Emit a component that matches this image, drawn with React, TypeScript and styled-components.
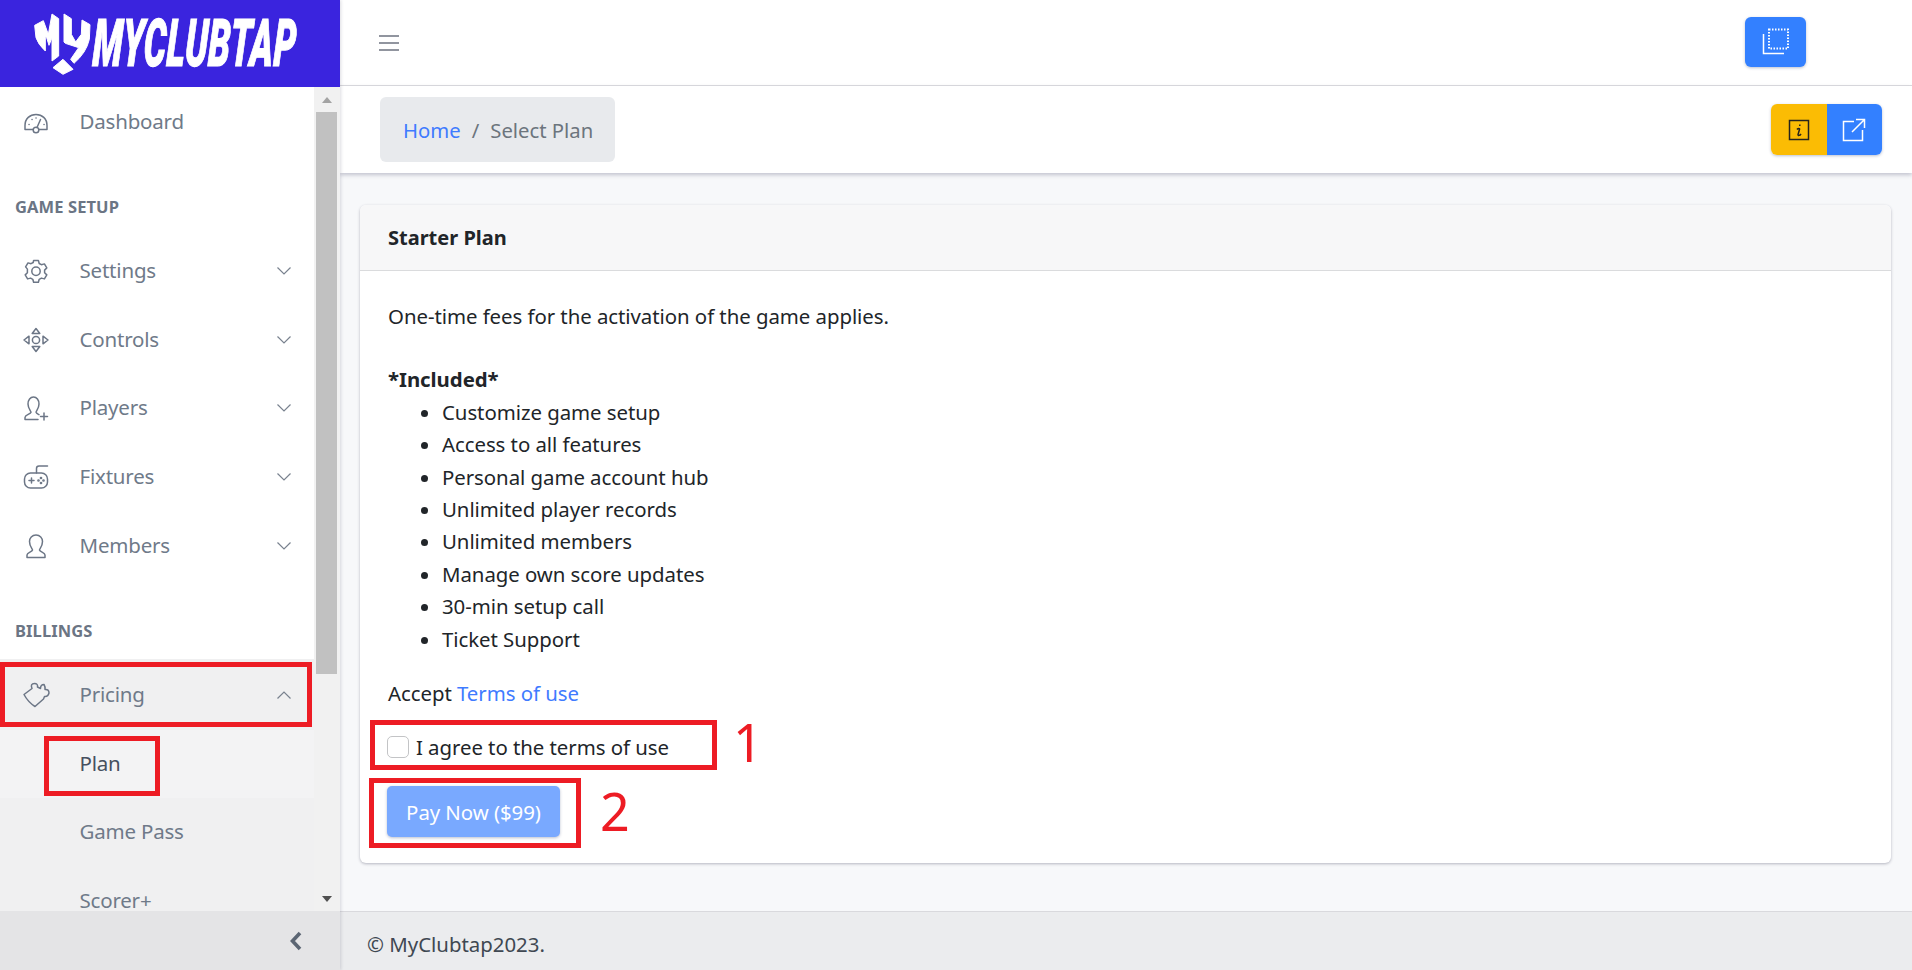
import React from "react";
import styled, { createGlobalStyle } from "styled-components";

const Global = createGlobalStyle`
  html, body { margin: 0; padding: 0; height: 100%; overflow: hidden; }
  body { font-family: "Noto Sans", "Open Sans", Arial, sans-serif; color: #212529; background: #f7f8fa; }
  * { box-sizing: border-box; }
`;

const Shell = styled.div`display: flex; width: 1912px; height: 970px; overflow: hidden;`;
const Sidebar = styled.aside`width: 340px; flex: none; display: flex; flex-direction: column; height: 970px; background: #fff; box-shadow: 1px 0 3px rgba(30,30,60,.15); position: relative; z-index: 3;`;
const Brand = styled.div`height: 87px; flex: none; background: #3a24de; display: flex; align-items: center; padding-left: 28px; overflow: hidden;`;
const BrandMark = styled.svg`width: 70px; height: 75px; flex: none; margin: 0 -5px 0 0; fill: #fff; stroke: #fff; stroke-width: 3; stroke-linejoin: round;`;
const BrandName = styled.span`
  font-family: Roboto, "Liberation Sans", sans-serif; font-weight: 900; font-style: italic; font-size: 66px; line-height: 1; color: #fff;
  -webkit-text-stroke: 1.2px #fff;
  display: inline-block; transform: scaleX(.53) skewX(-5deg); transform-origin: left center; white-space: nowrap; letter-spacing: 1px;
`;
const NavArea = styled.div`flex: 1; min-height: 0; display: flex; overflow: hidden;`;
const NavList = styled.nav`flex: 1; min-width: 0; overflow: hidden;`;
const Scrollbar = styled.div`width: 26px; flex: none; background: #f1f1f1; padding: 0 3px 0 2px; display: flex; flex-direction: column; align-items: stretch; position: relative;`;
const ScrollArrow = styled.div<{ $up?: boolean }>`
  height: 25px; flex: none; display: flex; align-items: center; justify-content: center;
  &::before { content: ""; width: 0; height: 0; border-left: 5.5px solid transparent; border-right: 5.5px solid transparent;
    ${p => p.$up ? "border-bottom: 6px solid #a3a3a3;" : "border-top: 6px solid #505050;"} }
`;
const ScrollThumb = styled.div`height: 562px; background: #c1c1c1; flex: none;`;
const ScrollGap = styled.div`flex: 1;`;
const NavRow = styled.div<{ $open?: boolean; $sub?: boolean; $active?: boolean; $tall?: boolean }>`
  height: ${p => p.$tall ? "69px" : "68.6px"}; display: flex; align-items: center; padding-left: ${p => p.$sub ? "79.5px" : "22px"}; padding-right: 22px;
  font-size: 20.5px; color: ${p => p.$active ? "#46505f" : "#6f7a89"}; position: relative;
  background: ${p => p.$active ? "#f3f3f4" : p.$open ? "#f0f0f1" : "transparent"};
`;
const NavIcon = styled.svg`width: 28px; height: 28px; flex: none; margin-right: 29.5px; fill: none; stroke: #6c7686; stroke-width: 1.5; stroke-linecap: round; stroke-linejoin: round;`;
const NavText = styled.span`flex: 1; letter-spacing: -.2px; padding-bottom: 2px;`;
const Chevron = styled.svg`width: 16px; height: 10px; flex: none; fill: none; stroke: #79828f; stroke-width: 1.2;`;
const NavGroup = styled.div`background: #f0f0f1; height: 300px; padding-top: 2px;`;
const SectionLabel = styled.div<{ $end?: boolean }>`
  font-size: 16.5px; font-weight: 700; color: #6b7584; padding: 0 15px; line-height: 24px; margin-top: 39px; margin-bottom: ${p => p.$end ? "16px" : "18px"}; letter-spacing: .1px;
`;
const Collapse = styled.div`height: 59px; flex: none; background: #e4e4e6; display: flex; align-items: center; justify-content: flex-end; padding-right: 37px;`;
const CollapseIcon = styled.svg`width: 14px; height: 20px; fill: none; stroke: #5b6573; stroke-width: 3.6;`;

const Main = styled.div`flex: 1; min-width: 0; display: flex; flex-direction: column;`;
const TopBar = styled.header`height: 86px; flex: none; background: #fff; border-bottom: 1px solid #dcdce0; display: flex; align-items: center; padding-left: 38px; justify-content: space-between; padding-right: 106px;`;
const Burger = styled.svg`width: 22px; height: 18px; fill: none; stroke: #6d7380; stroke-width: 1.6;`;
const SquareButton = styled.button`width: 61px; height: 50px; margin-top: -1px; border: 0; border-radius: 6px; background: #3380ff; display: flex; align-items: center; justify-content: center; box-shadow: 0 1px 3px rgba(30,50,100,.3); padding: 0;`;
const ButtonIcon = styled.svg`width: 28px; height: 28px; fill: none; stroke: #fff; stroke-width: 1.5;`;
const SubBar = styled.div`height: 87px; flex: none; background: #fff; display: flex; align-items: center; justify-content: space-between; padding: 0 30px 0 40px; box-shadow: 0 2px 4px rgba(40,40,80,.25); position: relative; z-index: 1;`;
const Crumbs = styled.ol`list-style: none; margin: 0; height: 65px; display: flex; align-items: center; gap: 11px; background: #e8eaed; border-radius: 6px; padding: 1px 22px 0 23px; font-size: 20.3px;`;
const CrumbLink = styled.a`color: #3f7bff; text-decoration: none;`;
const CrumbSep = styled.span`color: #6c757d;`;
const CrumbCurrent = styled.span`color: #6c757d;`;
const ButtonGroup = styled.div`display: flex; border-radius: 6px; overflow: hidden; box-shadow: 0 1px 3px rgba(30,50,100,.3);`;
const GroupButton = styled.button<{ $bg: string }>`width: 55.5px; height: 51px; border: 0; background: ${p => p.$bg}; display: flex; align-items: center; justify-content: center; padding: 0;`;
const InfoIcon = styled.svg`width: 22px; height: 22px; fill: none; stroke: #26241c; stroke-width: 1.5;`;

const Content = styled.main`flex: 1; min-height: 0; background: #f7f8fa; padding: 32px 21px 0 20px;`;
const Card = styled.section`height: 658px; background: #fff; border-radius: 6px; box-shadow: 0 1px 3px rgba(30,30,60,.3);`;
const CardHead = styled.h2`margin: 0; height: 66px; background: #f7f7f8; border-radius: 6px 6px 0 0; border-bottom: 1px solid #dadbdd; padding: 0 28px; display: flex; align-items: center; font-size: 20px; font-weight: 700; color: #212529;`;
const CardBody = styled.div`padding: 28.5px 28px 0; font-size: 20.4px; line-height: 32.4px; color: #212529; letter-spacing: -.05px;`;
const Para = styled.p`margin: 0 0 31.5px;`;
const Strong = styled.div`font-weight: 700;`;
const Bullets = styled.ul`margin: 0 0 21.5px; padding-left: 54px; list-style: disc;`;
const TermsLink = styled.a`color: #3f7bff; text-decoration: none;`;
const CheckRow = styled.label`display: flex; align-items: center; gap: 7px; margin-top: 21.5px; height: 32.5px; position: relative;`;
const Check = styled.input`appearance: none; width: 22px; height: 22px; margin: 0 0 0 -1px; border: 1px solid #c3c4c6; border-radius: 5px; background: #fff; flex: none;`;
const PayRow = styled.div`margin-top: 23px; position: relative; display: flex;`;
const PayButton = styled.button`margin-left: -1px; width: 173px; height: 51px; border: 0; border-radius: 5px; background: #79a9ff; color: #fff; font: inherit; letter-spacing: inherit; box-shadow: 0 1px 3px rgba(30,50,100,.3); padding: 1px 0 0;`;

const RedBox = styled.div<{ $l: number; $t: number; $w: number; $h: number }>`
  position: absolute; left: ${p => p.$l}px; top: ${p => p.$t}px; width: ${p => p.$w}px; height: ${p => p.$h}px; border: 5px solid #ed1c24; pointer-events: none; z-index: 4;
`;
const RedNumber = styled.span<{ $l: number; $t: number }>`
  position: absolute; left: ${p => p.$l}px; top: ${p => p.$t}px; color: #ed1c24; font-size: 52px; line-height: 60px; z-index: 4;
`;

const Foot = styled.footer`height: 59px; flex: none; background: #ebecee; border-top: 1px solid #d9d9dd; display: flex; align-items: center; padding-left: 27px; font-size: 20.4px; color: #3f4852; padding-top: 5px;`;

const Items: [string, React.ReactNode][] = [
  ["Settings", <><path d="M11.6 3.5h4.8l.8 3 2.2 1.2 3-.8 2.4 4-2.2 2.2v2.6l2.2 2.2-2.4 4-3-.8-2.2 1.2-.8 3h-4.8l-.8-3-2.2-1.2-3 .8-2.4-4 2.2-2.2V12.1L3.6 9.9l2.4-4 3 .8 2.2-1.2z" /><circle cx="14" cy="14.2" r="4.2" /></>],
  ["Controls", <><circle cx="14" cy="14" r="3.6" /><path d="M14 2.5l3.8 5h-7.6zM14 25.5l3.8-5h-7.6zM2 14l5-3.8v7.6zM26 14l-5-3.8v7.6z" /></>],
  ["Players", <><path d="M3 25.5v-2c0-2.5 5.5-3.3 6-5.3 0-1.2-3-3.5-3-8.2C6 6 8.3 3 11.5 3S17 6 17 10c0 4.7-3 7-3 8.2.2 1.2 2 2 3 2.5M3 25.5h13" /><path d="M22 19v7M18.5 22.5h7" /></>],
  ["Fixtures", <><path d="M25.5 3H17c-1.5 0-2.5 1-2.5 2.500V10" /><rect x="2.500" y="10" width="23" height="15" rx="6" /><path d="M7 17.500h5M9.500 15v5" /><circle cx="19" cy="15" r=".6" /><circle cx="19" cy="20" r=".6" /><circle cx="16.500" cy="17.500" r=".6" /><circle cx="21.500" cy="17.500" r=".6" /></>],
  ["Members", <><path d="M5 25.500v-2.500c0-2.500 5-3 5.500-5 0-1.200-3-3.500-3-8.500C7.500 6 10 3 14 3s6.500 3 6.500 6.500c0 5-3 7.300-3 8.500.5 2 5.500 2.500 5.500 5v2.500z" /></>],
];

function Down() { return <Chevron viewBox="0 0 16 10"><path d="M1.500 1.500L8 8l6.500-6.500" /></Chevron>; }

export default function App() {
  return (
    <Shell>
      <Global />
      <Sidebar>
        <Brand>
          <BrandMark viewBox="0 0 210 225" aria-hidden="true">
            <path d="M20 58L46 44 61 85 72 24 92 38V150L72 165V95L63 118 56 95 52 90V135Q30 115 24 95Z" />
            <path d="M108 24L130 38V85L143 108 160 85 162 42 186 56 184 100Q175 140 138 172L128 160 152 125 112 112 108 108Z" />
            <path d="M105 160L135 190 105 205 75 185Z" />
          </BrandMark>
          <BrandName>MYCLUBTAP</BrandName>
        </Brand>
        <NavArea>
          <NavList>
            <NavRow $tall>
              <NavIcon viewBox="0 0 28 28"><path d="M11 21.500H3v-4C3 10.500 8 6.500 14 6.500s11 4 11 11v4h-8" /><circle cx="14" cy="22" r="2.800" /><path d="M15 19.500l3.500-8M7 16.500h.1M10 11.500h.1M14 10h.1M22 16.500h.1" /></NavIcon>
              <NavText>Dashboard</NavText>
            </NavRow>
            <SectionLabel>GAME SETUP</SectionLabel>
            {Items.map(([label, icon]) => (
              <NavRow key={label}>
                <NavIcon viewBox="0 0 28 28">{icon}</NavIcon>
                <NavText>{label}</NavText>
                <Down />
              </NavRow>
            ))}
            <SectionLabel $end>BILLINGS</SectionLabel>
            <NavGroup>
              <NavRow $open>
                <NavIcon viewBox="0 0 28 28"><path d="M2 13.500L10 7.500Q8 2.500 12.500 2.500 16 2.500 15.500 6L18.500 7.500Q18.500 3.500 22 3.500 23.500 6 23 8.500 27 8 27 12 26 16 22.500 15.500L21.500 18 13 25.500Q6 21 2 13.500Z" /></NavIcon>
                <NavText>Pricing</NavText>
                <Chevron viewBox="0 0 16 10"><path d="M1.500 8.500L8 2l6.500 6.500" /></Chevron>
              </NavRow>
              <NavRow $sub $active><NavText>Plan</NavText></NavRow>
              <NavRow $sub $open><NavText>Game Pass</NavText></NavRow>
              <NavRow $sub $open><NavText>Scorer+</NavText></NavRow>
            </NavGroup>
          </NavList>
          <Scrollbar>
            <ScrollArrow $up />
            <ScrollThumb />
            <ScrollGap />
            <ScrollArrow />
          </Scrollbar>
        </NavArea>
        <Collapse>
          <CollapseIcon viewBox="0 0 14 20"><path d="M11 2L3.500 10 11 18" /></CollapseIcon>
        </Collapse>
        <RedBox $l={0} $t={662} $w={312} $h={65} />
        <RedBox $l={44} $t={736} $w={116} $h={60} />
      </Sidebar>
      <Main>
        <TopBar>
          <Burger viewBox="0 0 22 18"><path d="M1 2h20M1 9h20M1 16h20" /></Burger>
          <SquareButton aria-label="Fullscreen">
            <ButtonIcon viewBox="0 0 28 28">
              <path d="M1.500 6v19.500H22" />
              <rect x="7" y="1.500" width="19" height="19" strokeDasharray="1.500 1.500" strokeWidth="2" />
            </ButtonIcon>
          </SquareButton>
        </TopBar>
        <SubBar>
          <Crumbs>
            <CrumbLink href="#">Home</CrumbLink>
            <CrumbSep>/</CrumbSep>
            <CrumbCurrent>Select Plan</CrumbCurrent>
          </Crumbs>
          <ButtonGroup>
            <GroupButton $bg="#fbbc04" aria-label="Info">
              <InfoIcon viewBox="0 0 22 22"><rect x="1.500" y="1.500" width="19" height="19" /><path d="M11.800 5.500v1.500M9 10.500c1-1.500 3-1.500 2.500 0l-1.500 5c0 1.500 2 1 3-.5" /></InfoIcon>
            </GroupButton>
            <GroupButton $bg="#3380ff" aria-label="Open">
              <ButtonIcon viewBox="0 0 28 28"><path d="M14 5.500H3.500v19h19V14M12 16L24.500 3.500M16 3.500h8.500V12" /></ButtonIcon>
            </GroupButton>
          </ButtonGroup>
        </SubBar>
        <Content>
          <Card>
            <CardHead>Starter Plan</CardHead>
            <CardBody>
              <Para>One-time fees for the activation of the game applies.</Para>
              <Strong>*Included*</Strong>
              <Bullets>
                <li>Customize game setup</li>
                <li>Access to all features</li>
                <li>Personal game account hub</li>
                <li>Unlimited player records</li>
                <li>Unlimited members</li>
                <li>Manage own score updates</li>
                <li>30-min setup call</li>
                <li>Ticket Support</li>
              </Bullets>
              <div>Accept <TermsLink href="#">Terms of use</TermsLink></div>
              <CheckRow>
                <Check type="checkbox" />
                I agree to the terms of use
                <RedBox $l={-18} $t={-10} $w={347} $h={50} />
                <RedNumber $l={345} $t={-18}>1</RedNumber>
              </CheckRow>
              <PayRow>
                <PayButton>Pay Now ($99)</PayButton>
                <RedBox $l={-19} $t={-8} $w={212} $h={70} />
                <RedNumber $l={212} $t={-5}>2</RedNumber>
              </PayRow>
            </CardBody>
          </Card>
        </Content>
        <Foot>© MyClubtap2023.</Foot>
      </Main>
    </Shell>
  );
}
